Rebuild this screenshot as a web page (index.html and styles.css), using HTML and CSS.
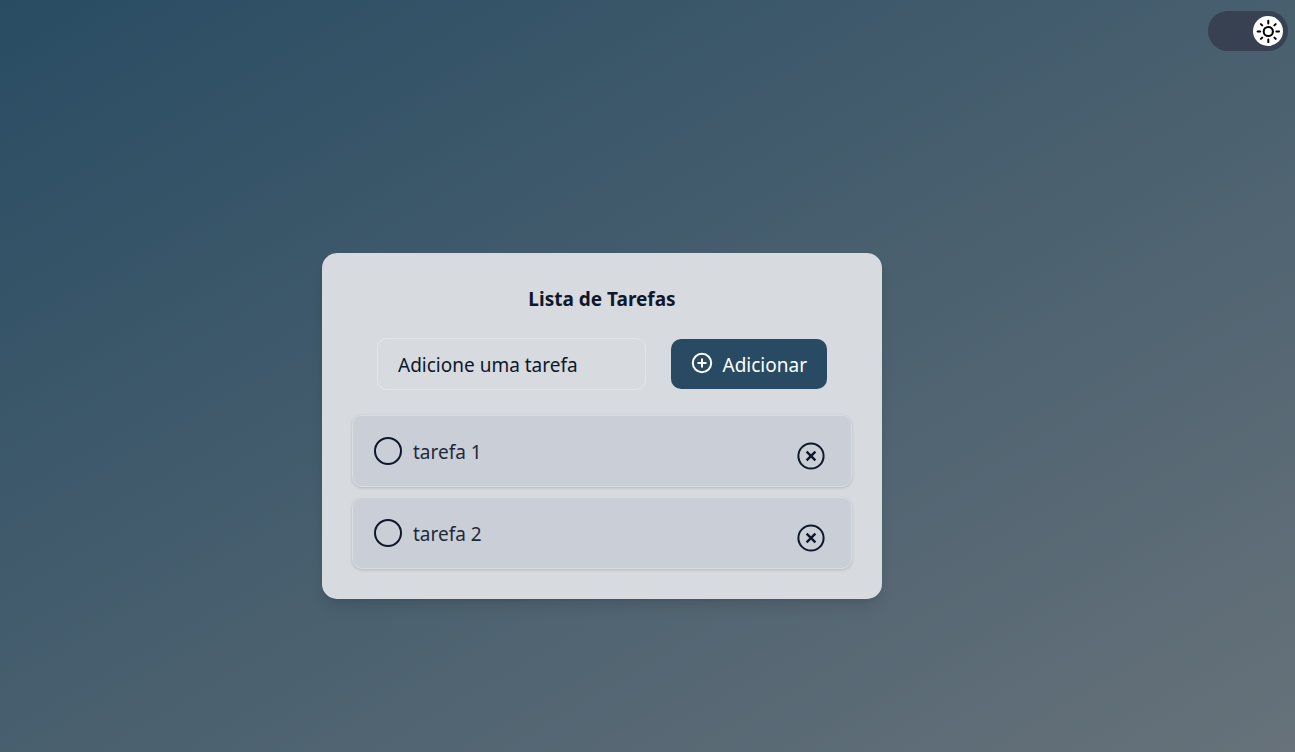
FILE: index.html
```html
<!DOCTYPE html>
<html lang="pt-BR">
<head>
<meta charset="utf-8">
<meta name="viewport" content="width=device-width, initial-scale=1">
<title>Lista de Tarefas</title>
<link rel="stylesheet" href="styles.css">
</head>
<body class="page">
<main class="content">
  <section class="card">
    <h1 class="title">Lista de Tarefas</h1>
    <form class="task-form">
      <input class="task-input" type="text" placeholder="Adicione uma tarefa" aria-label="Adicione uma tarefa">
      <button class="add-button" type="button">
        <svg class="add-icon" viewBox="0 0 22 22" aria-hidden="true"><circle cx="11" cy="11" r="9.2"/><path d="M11 6.5v9M6.5 11h9"/></svg>
        <span>Adicionar</span>
      </button>
    </form>
    <ul class="task-list">
      <li class="task">
        <label class="task-label"><input class="task-check" type="checkbox"><span>tarefa 1</span></label>
        <button class="remove-button" type="button" aria-label="Remover tarefa 1">
          <svg class="remove-icon" viewBox="0 0 28 28" aria-hidden="true"><circle cx="14" cy="14" r="12.6"/><path class="cross" d="M9.6 9.6l8.8 8.8M18.4 9.6l-8.8 8.8"/></svg>
        </button>
      </li>
      <li class="task">
        <label class="task-label"><input class="task-check" type="checkbox"><span>tarefa 2</span></label>
        <button class="remove-button" type="button" aria-label="Remover tarefa 2">
          <svg class="remove-icon" viewBox="0 0 28 28" aria-hidden="true"><circle cx="14" cy="14" r="12.6"/><path class="cross" d="M9.6 9.6l8.8 8.8M18.4 9.6l-8.8 8.8"/></svg>
        </button>
      </li>
    </ul>
  </section>
</main>
<button class="theme-toggle" type="button" role="switch" aria-checked="true" aria-label="Alternar tema">
  <span class="knob">
    <svg class="sun" viewBox="0 0 24 24" aria-hidden="true"><circle cx="12.3" cy="12.5" r="4.6"/><path d="M12.3 1.8v2.6M12.3 20.6v2.6M1.6 12.5h2.6M20.4 12.5H23M4.9 5.1l1.3 1.3M18.4 18.6l1.3 1.3M4.9 19.9l1.3-1.3M18.4 6.4l1.3-1.3"/></svg>
  </span>
</button>
</body>
</html>
```

FILE: styles.css
```css
* {
  box-sizing: border-box;
}

.page {
  margin: 0;
  min-height: 100vh;
  display: flex;
  align-items: flex-start;
  background: linear-gradient(to bottom right, #294c63, #67727a);
  color: #0f172a;
  font-family: "Segoe UI", "Noto Sans", "Open Sans", sans-serif;
  font-size: 19px;
  line-height: 28px;
}

.content {
  flex: 1;
  min-height: 100vh;
  display: flex;
  align-items: center;
  justify-content: center;
  padding: 100px 4px 0 0;
}

.card {
  width: 560px;
  max-width: 100%;
  padding: 32px 30px 30px;
  border-radius: 15px;
  background: #d7dadf;
  box-shadow: 0 10px 15px -3px rgba(0, 0, 0, 0.1), 0 4px 6px -4px rgba(0, 0, 0, 0.1);
}

.title {
  margin: 0 0 25px;
  font-size: 19px;
  line-height: 28px;
  font-weight: 700;
  text-align: center;
}

.task-form {
  display: flex;
  align-items: center;
  gap: 25px;
  padding: 0 25px;
  margin-bottom: 25px;
}

.task-input {
  flex: 1;
  min-width: 0;
  height: 52px;
  padding: 1px 20px 0;
  border: 1px solid #e3e6e9;
  border-radius: 10px;
  background: transparent;
  color: inherit;
  font: inherit;
}

.task-input::placeholder {
  color: #0f172a;
  opacity: 1;
}

.add-button {
  display: flex;
  align-items: center;
  gap: 10px;
  height: 50px;
  padding: 2px 20px 0;
  border: 0;
  border-radius: 10px;
  background: #284b63;
  color: #fff;
  font: inherit;
}

.add-icon {
  width: 22px;
  height: 22px;
  margin-bottom: 4px;
  fill: none;
  stroke: currentColor;
  stroke-width: 2;
}

.task-list {
  display: grid;
  gap: 10px;
  margin: 0;
  padding: 0;
  list-style: none;
}

.task {
  display: flex;
  align-items: center;
  justify-content: space-between;
  min-height: 72px;
  padding: 2px 26px 0 21px;
  border: 1px solid #d9dce0;
  border-radius: 10px;
  background: #cacfd7;
  color: #1e293b;
  box-shadow: 0 1px 3px rgba(0, 0, 0, 0.16);
}

.task-label {
  display: flex;
  align-items: center;
  gap: 11px;
}

.task-check {
  appearance: none;
  width: 28px;
  height: 28px;
  margin: 0 0 2px;
  border: 2px solid #0f172a;
  border-radius: 50%;
}

.remove-button {
  display: flex;
  margin-top: 8px;
  padding: 0;
  border: 0;
  background: none;
  color: #0f172a;
}

.remove-icon {
  width: 28px;
  height: 28px;
  fill: none;
  stroke: currentColor;
  stroke-width: 2;
}

.cross {
  stroke-width: 2.4;
}

.theme-toggle {
  display: flex;
  align-items: center;
  justify-content: flex-end;
  flex: none;
  width: 80px;
  height: 40px;
  margin: 11px 7px 0 0;
  padding: 0 5px;
  border: 0;
  border-radius: 20px;
  background: #374151;
}

.knob {
  display: grid;
  place-items: center;
  width: 30px;
  height: 30px;
  border-radius: 50%;
  background: #fff;
}

.sun {
  width: 24px;
  height: 24px;
  fill: none;
  stroke: #000;
  stroke-width: 2;
  stroke-linecap: round;
}
```
